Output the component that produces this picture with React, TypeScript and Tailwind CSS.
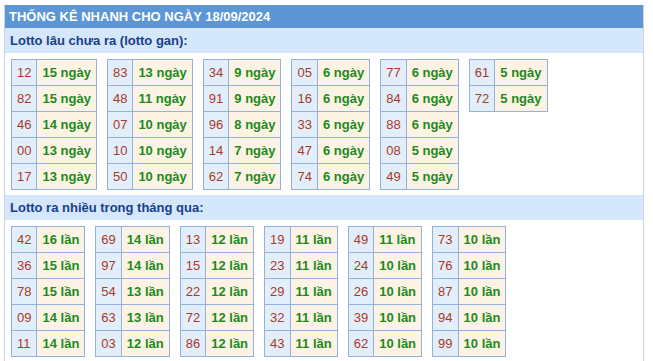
import React from 'react';

type Entry = [string, string];

const ganCols: Entry[][] = [
  [['12', '15'], ['82', '15'], ['46', '14'], ['00', '13'], ['17', '13']],
  [['83', '13'], ['48', '11'], ['07', '10'], ['10', '10'], ['50', '10']],
  [['34', '9'], ['91', '9'], ['96', '8'], ['14', '7'], ['62', '7']],
  [['05', '6'], ['16', '6'], ['33', '6'], ['47', '6'], ['74', '6']],
  [['77', '6'], ['84', '6'], ['88', '6'], ['08', '5'], ['49', '5']],
  [['61', '5'], ['72', '5']],
];

const nhieuCols: Entry[][] = [
  [['42', '16'], ['36', '15'], ['78', '15'], ['09', '14'], ['11', '14']],
  [['69', '14'], ['97', '14'], ['54', '13'], ['63', '13'], ['03', '12']],
  [['13', '12'], ['15', '12'], ['22', '12'], ['72', '12'], ['86', '12']],
  [['19', '11'], ['23', '11'], ['29', '11'], ['32', '11'], ['43', '11']],
  [['49', '11'], ['24', '10'], ['26', '10'], ['39', '10'], ['62', '10']],
  [['73', '10'], ['76', '10'], ['87', '10'], ['94', '10'], ['99', '10']],
];

function StatTable({ rows, unit }: { rows: Entry[]; unit: string }) {
  return (
    <table className="border-collapse">
      <tbody>
        {rows.map(([num, count]) => (
          <tr key={num}>
            <td className="h-[26px] border border-[#93b1df] bg-[#e3eefb] px-[5px] text-[#a83a28]">{num}</td>
            <td className="h-[26px] border border-[#93b1df] bg-[#fdf3e4] px-[5px] font-bold text-[#1c8a1c]">
              {count} {unit}
            </td>
          </tr>
        ))}
      </tbody>
    </table>
  );
}

function Section({ title, cols, unit }: { title: string; cols: Entry[][]; unit: string }) {
  return (
    <>
      <div className="h-[25px] bg-[#d5e7fa] px-[5px] text-[13px] leading-[25px] font-bold text-[#17408c]">{title}</div>
      <div className="flex items-start gap-[10px] px-[6px] pt-[6px] pb-[5px]">
        {cols.map((rows, i) => (
          <StatTable key={i} rows={rows} unit={unit} />
        ))}
      </div>
    </>
  );
}

export default function App() {
  return (
    <div className="min-h-screen bg-white pt-[5px] pl-[4px] font-['Liberation_Sans',Arial,sans-serif] text-[13px]">
      <div className="w-[640px] border-x border-[#c9d2df] bg-white">
        <div className="h-[23px] bg-[#5c96d6] px-[4px] text-[13px] leading-[23px] font-bold text-white">
          THỐNG KÊ NHANH CHO NGÀY 18/09/2024
        </div>
        <Section title="Lotto lâu chưa ra (lotto gan):" cols={ganCols} unit="ngày" />
        <Section title="Lotto ra nhiều trong tháng qua:" cols={nhieuCols} unit="lần" />
      </div>
    </div>
  );
}
